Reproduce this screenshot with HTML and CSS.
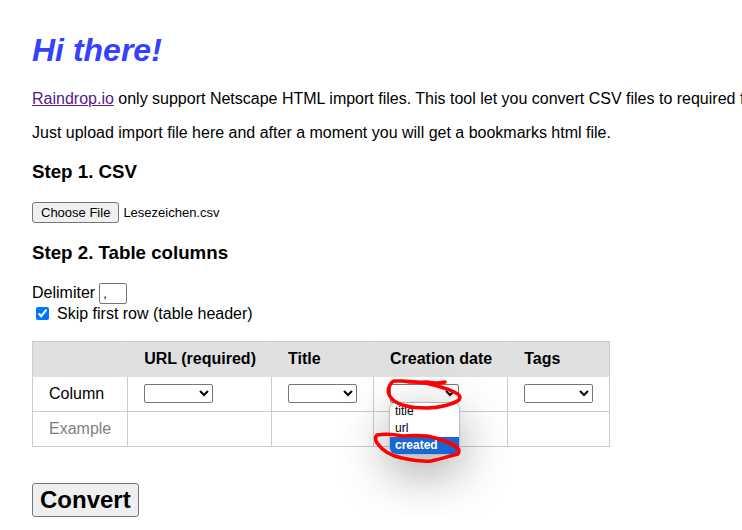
FILE: index.html
```html
<!DOCTYPE html>
<html lang="en">
<head>
<meta charset="utf-8">
<title>CSV to HTML bookmarks</title>
<link rel="stylesheet" href="styles.css">
</head>
<body>
<h1>Hi there!</h1>
<p class="intro"><a href="#raindrop">Raindrop.io</a> only support Netscape HTML import files. This tool let you convert CSV files to required format.</p>
<p>Just upload import file here and after a moment you will get a bookmarks html file.</p>

<form>
  <h3>Step 1. CSV</h3>
  <div class="file">
    <input class="file-input" type="file" id="csv" accept=".csv">
    <label class="file-button" for="csv">Choose File</label>
    <span class="file-name">Lesezeichen.csv</span>
  </div>

  <h3>Step 2. Table columns</h3>
  <div class="option option-text"><label for="delimiter">Delimiter</label> <input class="delimiter" type="text" id="delimiter" value=","></div>
  <div class="option"><input class="skip" type="checkbox" id="skip" checked><label for="skip">Skip first row (table header)</label></div>

  <table>
    <thead>
      <tr><th></th><th id="h-url">URL (required)</th><th id="h-title">Title</th><th id="h-date">Creation date</th><th id="h-tags">Tags</th></tr>
    </thead>
    <tbody>
      <tr>
        <td>Column</td>
        <td><select aria-labelledby="h-url"><option></option></select></td>
        <td><select aria-labelledby="h-title"><option></option></select></td>
        <td>
          <div class="picker">
            <select aria-labelledby="h-date"><option></option></select>
            <ul class="menu" role="listbox" aria-labelledby="h-date">
              <li role="option">title</li>
              <li role="option">url</li>
              <li role="option" class="selected" aria-selected="true">created</li>
            </ul>
            <svg class="marks" viewBox="0 0 94 90" aria-hidden="true">
              <path d="M75 6 Q66 8 57 6 Q42 7 33 5 L25 5 Q22 5 20 9 C17 14 18 19 22 23 C28 29 42 32 57 32 C70 32 83 28 89 24 Q92 20 86 17 C77 12 59 7 47 6 L33 5"/>
              <path d="M87 72 C80 66 68 62 57 60 Q45 59 33 60 Q19 57 7 59 Q4 62 7 67 C12 74 21 80 32 82 C42 84 52 86 61 85 C70 83 80 80 88 78 Q91 73 83 68 Q71 63 61 61"/>
            </svg>
          </div>
        </td>
        <td><select aria-labelledby="h-tags"><option></option></select></td>
      </tr>
      <tr class="example"><td>Example</td><td></td><td></td><td></td><td></td></tr>
    </tbody>
  </table>

  <button class="convert" type="button">Convert</button>
</form>
</body>
</html>
```
FILE: styles.css
```css
html {
  overflow: hidden;
}

body {
  margin: 32px 0 0 32px;
  background: #fff;
  color: #000;
  font: 16px/18px "Liberation Sans", Arial, sans-serif;
}

h1 {
  margin: 0 0 22px;
  color: #3641ff;
  font-size: 32px;
  line-height: 36px;
  font-style: italic;
}

p {
  margin: 0 0 16px;
}

.intro {
  white-space: nowrap;
}

a {
  color: #551a8b;
}

h3 {
  margin: 19px 0;
  line-height: 22px;
}

.file {
  display: flex;
  align-items: center;
  gap: 4px;
  position: relative;
  font-size: 13px;
}

.file-input {
  position: absolute;
  width: 1px;
  height: 1px;
  margin: 0;
  opacity: 0;
}

.file-button,
.convert {
  box-sizing: border-box;
  border: 1px solid #767676;
  border-radius: 3px;
  background: #efefef;
  color: #000;
}

.file-button {
  padding: 0 8px;
  line-height: 19px;
}

.option {
  display: flex;
  align-items: center;
  gap: 4px;
}

.option-text {
  align-items: baseline;
}

.delimiter {
  box-sizing: border-box;
  width: 28px;
  height: 21px;
  margin: 0;
  padding: 1px 3px;
  border: 1px solid #767676;
  border-radius: 2px;
  font: 13px "Liberation Sans", Arial, sans-serif;
}

.skip {
  width: 13px;
  height: 13px;
  margin: 3px 4px;
}

table {
  margin: 18px 0 36px;
  border-collapse: collapse;
}

th,
td {
  box-sizing: border-box;
  height: 35px;
  padding: 0 16px;
  border: 1px solid #ccc;
  text-align: left;
}

thead {
  background: #e0e0e0;
}

th {
  padding-right: 15px;
  border-color: #ccc #e0e0e0 #e0e0e0;
}

th:first-child {
  border-left-color: #ccc;
}

th:last-child {
  border-right-color: #ccc;
}

select {
  display: block;
  width: 69px;
  height: 19px;
  margin: 0 0 1px;
  border: 1px solid #767676;
  border-radius: 2px;
  background: #fff;
  font-size: 13px;
}

.example {
  color: #808080;
}

.picker {
  position: relative;
}

.menu {
  position: absolute;
  top: 19px;
  left: 0;
  width: 69px;
  margin: 0;
  padding: 0;
  overflow: hidden;
  border-radius: 6px;
  background: #fff;
  box-shadow: 0 0 1px 1px #bbb, 0 16px 50px rgba(0, 0, 0, 0.4);
  font-size: 12px;
  line-height: 17px;
  list-style: none;
}

.menu li {
  padding: 0 5px;
}

.menu .selected {
  background: #1967d2;
  color: #fff;
  font-weight: bold;
}

.marks {
  position: absolute;
  top: -8px;
  left: -20px;
  width: 94px;
  height: 90px;
  fill: none;
  stroke: #f00;
  stroke-width: 3.5;
  stroke-linecap: round;
  stroke-linejoin: round;
  pointer-events: none;
}

.convert {
  padding: 2px 7px;
  font: bold 24px/28px "Liberation Sans", Arial, sans-serif;
}
```
